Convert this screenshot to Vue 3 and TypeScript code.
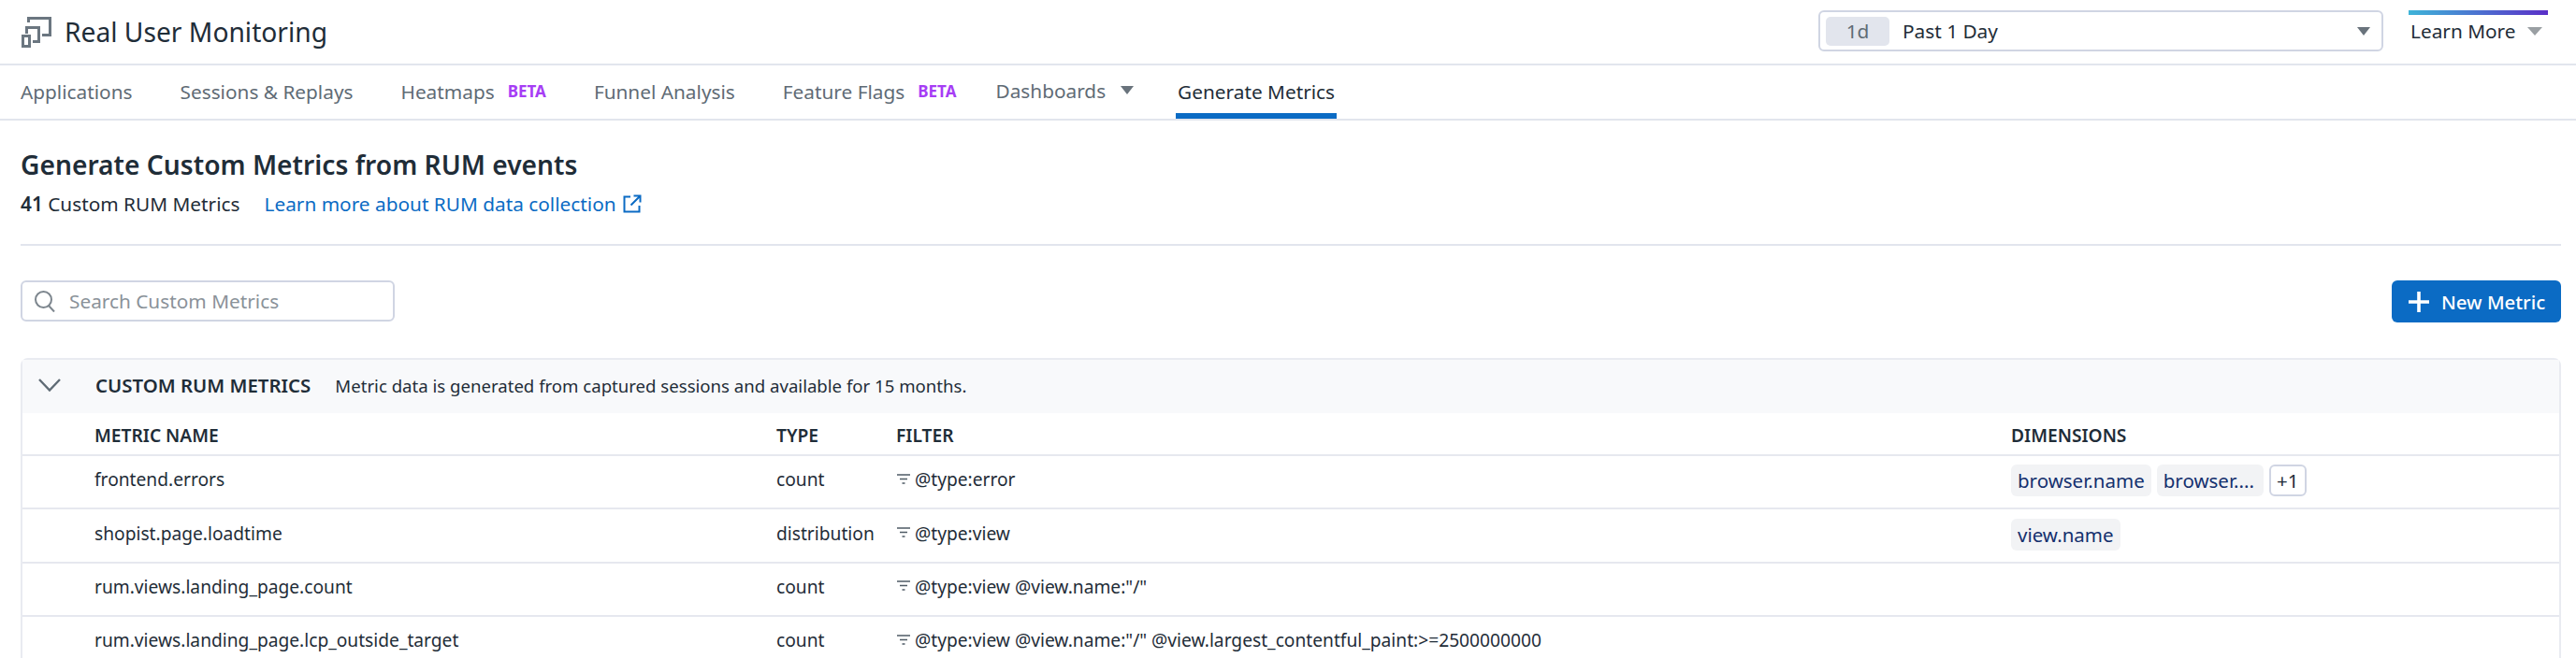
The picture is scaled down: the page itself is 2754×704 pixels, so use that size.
<script setup lang="ts">
type Tab = { label: string; beta?: boolean; caret?: boolean; active?: boolean };
type Metric = { name: string; type: string; filter: string; dims: string[]; more?: number };

const tabs: Tab[] = [
  { label: "Applications" },
  { label: "Sessions & Replays" },
  { label: "Heatmaps", beta: true },
  { label: "Funnel Analysis" },
  { label: "Feature Flags", beta: true },
  { label: "Dashboards", caret: true },
  { label: "Generate Metrics", active: true },
];

const metrics: Metric[] = [
  { name: "frontend.errors", type: "count", filter: "@type:error", dims: ["browser.name", "browser...."], more: 1 },
  { name: "shopist.page.loadtime", type: "distribution", filter: "@type:view", dims: ["view.name"] },
  { name: "rum.views.landing_page.count", type: "count", filter: '@type:view @view.name:"/"', dims: [] },
  {
    name: "rum.views.landing_page.lcp_outside_target",
    type: "count",
    filter: '@type:view @view.name:"/" @view.largest_contentful_paint:>=2500000000',
    dims: [],
  },
];
</script>

<template>
  <div class="page">
    <header class="top">
      <div class="brand">
        <svg class="logo" width="34" height="34" viewBox="0 0 34 34" fill="none" stroke="#6b7680" stroke-width="3">
          <path d="M8.5 7V2.5H31.5V20.5H23" />
          <path d="M6.5 19V12.5H19.5V27.5H13" />
          <rect x="2.5" y="21.5" width="7" height="11" />
        </svg>
        <h1 class="appName">Real User Monitoring</h1>
      </div>
      <div class="topRight">
        <div class="timeSelect">
          <span class="timeChip">1d</span>
          <span class="timeText">Past 1 Day</span>
          <span class="caret timeCaret"></span>
        </div>
        <div class="learn">
          <div class="learnBar"></div>
          <div class="learnRow">
            <span>Learn More</span>
            <span class="caret learnCaret"></span>
          </div>
        </div>
      </div>
    </header>

    <nav class="tabs">
      <div
        v-for="t in tabs"
        :key="t.label"
        class="tab"
        :class="{ active: t.active, hasCaret: t.caret }"
      >
        <span>{{ t.label }}</span>
        <span v-if="t.beta" class="beta">BETA</span>
        <span v-if="t.caret" class="caret tabCaret"></span>
      </div>
    </nav>

    <main class="content">
      <h2 class="heading">Generate Custom Metrics from RUM events</h2>
      <div class="subline">
        <span><b class="count">41</b> Custom RUM Metrics</span>
        <span class="docLink">
          Learn more about RUM data collection
          <svg width="20" height="20" viewBox="0 0 20 20" fill="none" stroke="#0b6bc4" stroke-width="2">
            <path d="M8 2.5H1.5v16h16V12" />
            <path d="M11.5 1.5h7v7M18 2l-9.5 9.5" />
          </svg>
        </span>
      </div>

      <div class="toolbar">
        <div class="search">
          <svg width="22" height="23" viewBox="0 0 22 23" fill="none" stroke="#7d868e" stroke-width="2">
            <circle cx="9.5" cy="9.5" r="8.5" />
            <path d="M15 16l6 6.5" />
          </svg>
          <span>Search Custom Metrics</span>
        </div>
        <div class="newBtn">
          <svg width="22" height="22" viewBox="0 0 22 22" stroke="#fff" stroke-width="3.6">
            <path d="M11 0v22M0 11h22" />
          </svg>
          <span>New Metric</span>
        </div>
      </div>

      <section class="table">
        <div class="groupHead">
          <svg class="chevron" width="24" height="14" viewBox="0 0 24 14" fill="none" stroke="#5f6b75" stroke-width="2.4">
            <path d="M1 1l11 11.5L23 1" />
          </svg>
          <span class="groupTitle">CUSTOM RUM METRICS</span>
          <span class="groupDesc">Metric data is generated from captured sessions and available for 15 months.</span>
        </div>

        <div class="row headRow">
          <div>METRIC NAME</div>
          <div>TYPE</div>
          <div>FILTER</div>
          <div>DIMENSIONS</div>
        </div>

        <div v-for="m in metrics" :key="m.name" class="row">
          <div class="cell">{{ m.name }}</div>
          <div class="cell">{{ m.type }}</div>
          <div class="cell filter">
            <svg width="14" height="14" viewBox="0 0 14 14" stroke="#4f5b65" stroke-width="1.6">
              <path d="M0 2h14M3 6.5h8M5.5 11h3" />
            </svg>
            <span>{{ m.filter }}</span>
          </div>
          <div class="dims">
            <span v-for="d in m.dims" :key="d" class="dim">{{ d }}</span>
            <span v-if="m.more" class="more">+{{ m.more }}</span>
          </div>
        </div>
      </section>
    </main>
  </div>
</template>

<style>
html, body { margin: 0; background: #fff; overflow: hidden; }
</style>

<style scoped>
.page {
  width: 2754px;
  height: 704px;
  overflow: hidden;
  font-family: "Noto Sans", sans-serif;
  font-size: 20.8px;
  color: #1f2d38;
  background: #fff;
}

.top {
  height: 68px;
  display: flex;
  align-items: flex-start;
  justify-content: space-between;
  padding: 0 16px 0 22px;
  border-bottom: 2px solid #e2e5ed;
}

.brand { display: flex; align-items: center; gap: 13px; height: 68px; }
.appName { margin: 0; font-size: 28.2px; font-weight: 400; }

.topRight { display: flex; gap: 27px; padding-top: 11px; }

.timeSelect {
  width: 604px;
  height: 44px;
  box-sizing: border-box;
  display: flex;
  align-items: center;
  padding: 0 12px 0 6px;
  border: 2px solid #d0d5e3;
  border-radius: 6px;
}
.timeChip {
  width: 68px;
  height: 31px;
  display: flex;
  align-items: center;
  justify-content: center;
  background: #e2e5ed;
  border-radius: 5px;
  color: #5f6b75;
  margin-right: 14px;
}
.timeText { flex: 1; }

.caret {
  width: 0;
  height: 0;
  border-left: 7.5px solid transparent;
  border-right: 7.5px solid transparent;
  border-top: 9px solid #69737c;
}

.learn { width: 163px; }
.learnBar { width: 149px; height: 5px; background: linear-gradient(90deg, #3eb4d8, #5a2fc8); }
.learnRow { display: flex; align-items: center; gap: 12px; padding: 1px 0 0 2px; height: 32px; }
.learnCaret { border-top-color: #9a9fa3; border-left-width: 8px; border-right-width: 8px; }

.tabs {
  height: 57px;
  display: flex;
  gap: 47px;
  padding-left: 20px;
  border-bottom: 2px solid #e2e5ed;
}
.tab {
  display: flex;
  align-items: center;
  gap: 14px;
  padding: 0 2px 2px;
  color: #5f6b75;
  height: 57px;
  box-sizing: border-box;
}
.tab.active { color: #1f2d38; border-bottom: 6px solid #0b6bc4; padding: 4px 2px 0; }
.tab.hasCaret { margin-left: -9px; margin-right: -4px; padding-bottom: 4px; }
.beta { font-size: 17px; font-weight: 700; color: #a63df5; }
.tabCaret { margin-left: 2px; }

.content { padding: 0 16px 0 22px; }

.heading { margin: 0; padding-top: 28px; font-size: 28.2px; line-height: 38px; font-weight: 600; }

.subline {
  display: flex;
  gap: 26px;
  align-items: center;
  height: 42px;
  margin-top: 2px;
  padding-bottom: 22px;
  border-bottom: 2px solid #e2e5ed;
}
.count { font-weight: 600; }
.docLink { display: inline-flex; align-items: center; gap: 7px; color: #0b6bc4; }

.toolbar { display: flex; justify-content: space-between; padding-top: 37px; }

.search {
  width: 400px;
  height: 44px;
  box-sizing: border-box;
  display: flex;
  align-items: center;
  gap: 15px;
  padding-left: 13px;
  border: 2px solid #d0d5e3;
  border-radius: 6px;
  color: #8a9299;
}

.newBtn {
  width: 181px;
  height: 45px;
  box-sizing: border-box;
  display: flex;
  align-items: center;
  gap: 13px;
  padding-left: 18px;
  background: #0b6bc4;
  color: #fff;
  font-size: 20.4px;
  font-weight: 500;
  border-radius: 6px;
}

.table {
  margin-top: 38px;
  border: 2px solid #e9ebf1;
  border-bottom: none;
  border-radius: 8px 8px 0 0;
}

.groupHead {
  height: 57px;
  box-sizing: border-box;
  display: flex;
  align-items: center;
  padding-bottom: 3px;
  background: #f8f9fb;
}
.chevron { margin-left: 17px; margin-right: 37px; }
.groupTitle { font-size: 20.4px; font-weight: 600; margin-right: 26px; }
.groupDesc { font-size: 18.6px; }

.row {
  height: 57.4px;
  box-sizing: border-box;
  display: grid;
  grid-template-columns: 729px 128px 1192px 1fr;
  align-items: center;
  padding-left: 77px;
  border-top: 2px solid #e6e8ef;
  font-size: 19.2px;
}
.headRow { height: 44px; border-top: none; font-weight: 600; padding-top: 2px; }
.cell { padding-bottom: 6px; }

.filter { display: flex; align-items: center; gap: 5px; padding-left: 1px; }

.dims { display: flex; gap: 6px; font-size: 20.5px; padding-bottom: 3px; }
.dim {
  height: 34px;
  display: flex;
  align-items: center;
  padding: 0 7px;
  background: #f2f3f5;
  border-radius: 6px;
  color: #14306e;
}
.dim:nth-child(2) { padding-right: 10px; }
.more {
  height: 34px;
  box-sizing: border-box;
  display: flex;
  align-items: center;
  padding: 0 6px;
  border: 2px solid #d0d5e3;
  border-radius: 6px;
}
</style>
